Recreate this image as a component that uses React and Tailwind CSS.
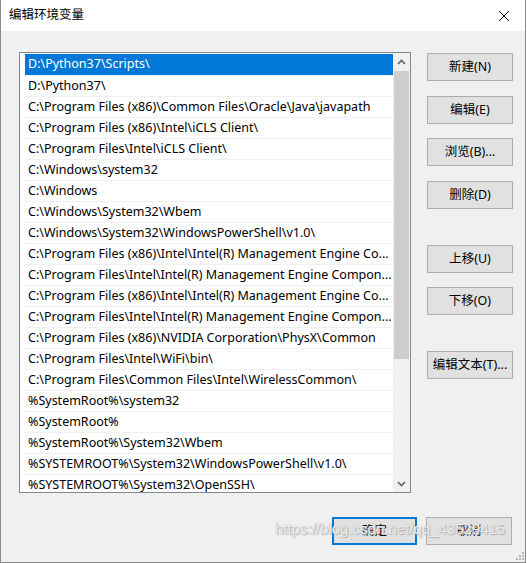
import React from "react";

const paths = [
  "D:\\Python37\\Scripts\\",
  "D:\\Python37\\",
  "C:\\Program Files (x86)\\Common Files\\Oracle\\Java\\javapath",
  "C:\\Program Files (x86)\\Intel\\iCLS Client\\",
  "C:\\Program Files\\Intel\\iCLS Client\\",
  "C:\\Windows\\system32",
  "C:\\Windows",
  "C:\\Windows\\System32\\Wbem",
  "C:\\Windows\\System32\\WindowsPowerShell\\v1.0\\",
  "C:\\Program Files (x86)\\Intel\\Intel(R) Management Engine Co...",
  "C:\\Program Files\\Intel\\Intel(R) Management Engine Compon...",
  "C:\\Program Files (x86)\\Intel\\Intel(R) Management Engine Co...",
  "C:\\Program Files\\Intel\\Intel(R) Management Engine Compon...",
  "C:\\Program Files (x86)\\NVIDIA Corporation\\PhysX\\Common",
  "C:\\Program Files\\Intel\\WiFi\\bin\\",
  "C:\\Program Files\\Common Files\\Intel\\WirelessCommon\\",
  "%SystemRoot%\\system32",
  "%SystemRoot%",
  "%SystemRoot%\\System32\\Wbem",
  "%SYSTEMROOT%\\System32\\WindowsPowerShell\\v1.0\\",
  "%SYSTEMROOT%\\System32\\OpenSSH\\",
];

function WinButton({ children, className = "" }) {
  return (
    <button
      className={`w-[86px] h-[28px] bg-[#e1e1e1] border border-[#adadad] text-[12.5px] text-black flex items-center justify-center ${className}`}
    >
      {children}
    </button>
  );
}

export default function App() {
  return (
    <div
      className="w-[527px] h-[563px] bg-white relative overflow-hidden"
      style={{ fontFamily: '"Noto Sans", "Noto Sans CJK SC", sans-serif' }}
    >
      <div className="w-[526px] h-[563px] bg-[#f0f0f0] border-l border-r border-b border-[#8a8a8a] flex flex-col">
        {/* Title bar */}
        <div className="h-[31px] bg-white flex items-center justify-between pl-[8px] pr-[9px] shrink-0">
          <span className="text-[12.5px] text-black">编辑环境变量</span>
          <svg width="12" height="12" viewBox="0 0 12 12" className="mr-[6px]">
            <path d="M1 1 L11 11 M11 1 L1 11" stroke="#000" strokeWidth="1" />
          </svg>
        </div>

        {/* Body */}
        <div className="flex pl-[18px] pt-[21px]">
          {/* List box */}
          <div className="w-[392px] h-[441px] border border-[#828790] bg-white flex">
            <div className="flex-1 pl-[5px] pt-[1px] overflow-hidden">
              {paths.map((p, i) => (
                <div
                  key={i}
                  className={`h-[21px] pl-[3px] flex items-center text-[12.5px] whitespace-nowrap overflow-hidden ${
                    i === 0
                      ? "bg-[#0078d7] text-white"
                      : "text-black border-t border-[#f0f0f0]"
                  }`}
                >
                  {p}
                </div>
              ))}
            </div>
            {/* Scrollbar */}
            <div className="w-[17px] bg-[#f0f0f0] flex flex-col shrink-0">
              <div className="h-[17px] flex items-center justify-center">
                <svg width="9" height="6" viewBox="0 0 9 6">
                  <path d="M1 5 L4.5 1.5 L8 5" stroke="#606060" strokeWidth="1.6" fill="none" />
                </svg>
              </div>
              <div className="mx-[1px] mt-[1px] h-[288px] bg-[#cdcdcd]" />
              <div className="flex-1" />
              <div className="h-[17px] flex items-center justify-center">
                <svg width="9" height="6" viewBox="0 0 9 6">
                  <path d="M1 1 L4.5 4.5 L8 1" stroke="#606060" strokeWidth="1.6" fill="none" />
                </svg>
              </div>
            </div>
          </div>

          {/* Right buttons */}
          <div className="flex flex-col ml-[16px] pt-[1px]">
            <WinButton>新建(N)</WinButton>
            <WinButton className="mt-[15px]">编辑(E)</WinButton>
            <WinButton className="mt-[14px]">浏览(B)...</WinButton>
            <WinButton className="mt-[15px]">删除(D)</WinButton>
            <WinButton className="mt-[36px]">上移(U)</WinButton>
            <WinButton className="mt-[14px]">下移(O)</WinButton>
            <WinButton className="mt-[36px]">编辑文本(T)...</WinButton>
          </div>
        </div>

        {/* Bottom buttons */}
        <div className="flex justify-end gap-[9px] pr-[13px] mt-[24px]">
          <button className="w-[85px] h-[28px] bg-[#e1e1e1] border-2 border-[#0078d7] text-[12.5px] text-black flex items-center justify-center">
            确定
          </button>
          <WinButton>取消</WinButton>
        </div>
      </div>

      {/* Watermark */}
      <div
        className="absolute left-[275px] top-[518px] text-[15px] text-white/80 [text-shadow:0_0_1px_#a0a0a0,1px_1px_1px_#b0b0b0]"
        style={{ fontFamily: '"Liberation Sans", sans-serif' }}
      >
        https://blog.csdn.net/qq_43529415
      </div>

      {/* Resize grip */}
      <svg className="absolute left-[516px] top-[552px]" width="8" height="8" viewBox="0 0 8 8">
        <rect x="6" y="0" width="2" height="2" fill="#b8b8b8" />
        <rect x="3" y="3" width="2" height="2" fill="#b8b8b8" />
        <rect x="6" y="3" width="2" height="2" fill="#b8b8b8" />
        <rect x="0" y="6" width="2" height="2" fill="#b8b8b8" />
        <rect x="3" y="6" width="2" height="2" fill="#b8b8b8" />
        <rect x="6" y="6" width="2" height="2" fill="#b8b8b8" />
      </svg>
    </div>
  );
}
